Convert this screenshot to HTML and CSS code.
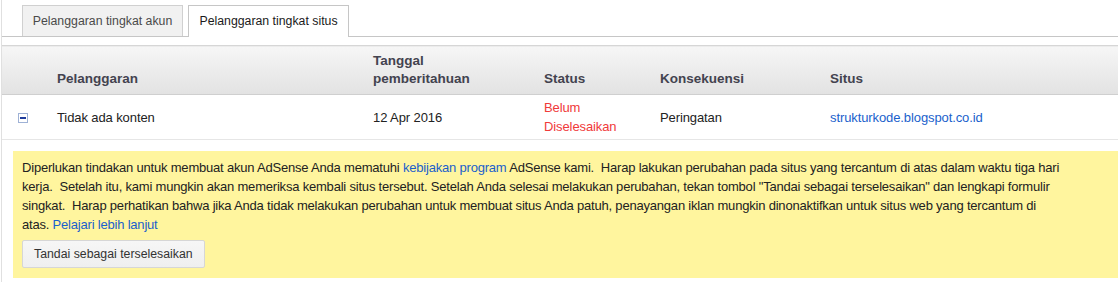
FILE: index.html
```html
<!DOCTYPE html>
<html lang="id">
<head>
    <meta charset="UTF-8">
    <title>Pelanggaran tingkat situs</title>
    <link rel="stylesheet" href="styles.css">
</head>
<body>
    <div class="page">
        <div class="tabs">
            <a class="tab" href="#">Pelanggaran tingkat akun</a>
            <a class="tab active" href="#">Pelanggaran tingkat situs</a>
        </div>
        <table class="violations">
            <colgroup>
                <col class="c-toggle">
                <col class="c-name">
                <col class="c-date">
                <col class="c-status">
                <col class="c-cons">
                <col>
            </colgroup>
            <thead>
                <tr>
                    <th></th>
                    <th>Pelanggaran</th>
                    <th>Tanggal<br>pemberitahuan</th>
                    <th>Status</th>
                    <th>Konsekuensi</th>
                    <th>Situs</th>
                </tr>
            </thead>
            <tbody>
                <tr>
                    <td class="toggle">
                        <svg width="10" height="10" viewBox="0 0 10 10">
                            <rect x="0.5" y="0.5" width="9" height="9" fill="#fff" stroke="#9fb2d6"/>
                            <rect x="2" y="4" width="6" height="2" fill="#1f3c9c"/>
                        </svg>
                    </td>
                    <td>Tidak ada konten</td>
                    <td>12 Apr 2016</td>
                    <td class="unresolved">Belum Diselesaikan</td>
                    <td>Peringatan</td>
                    <td><a href="#">strukturkode.blogspot.co.id</a></td>
                </tr>
            </tbody>
        </table>
        <div class="notice">
            <p>Diperlukan tindakan untuk membuat akun AdSense Anda mematuhi <a href="#">kebijakan program</a> AdSense kami.&nbsp; Harap lakukan perubahan pada situs yang tercantum di atas dalam waktu tiga hari kerja.&nbsp; Setelah itu, kami mungkin akan memeriksa kembali situs tersebut. Setelah Anda selesai melakukan perubahan, tekan tombol "Tandai sebagai terselesaikan" dan lengkapi formulir singkat.&nbsp; Harap perhatikan bahwa jika Anda tidak melakukan perubahan untuk membuat situs Anda patuh, penayangan iklan mungkin dinonaktifkan untuk situs web yang tercantum di atas. <a href="#">Pelajari lebih lanjut</a></p>
            <button class="btn">Tandai sebagai terselesaikan</button>
        </div>
    </div>
</body>
</html>
```

FILE: styles.css
```css
body {
    margin: 0;
    font-family: "Liberation Sans", Arial, sans-serif;
    font-size: 13px;
    color: #222;
    background-color: #fff;
}
a {
    color: #1a5fcc;
    text-decoration: none;
}
.page {
    margin-left: 1px;
    border-left: 1px solid #e0e0e0;
    min-height: 282px;
}
.tabs {
    display: flex;
    gap: 5px;
    height: 31px;
    padding: 5px 0 0 20px;
    border-bottom: 1px solid #c6c6c6;
}
.tab {
    box-sizing: border-box;
    width: 161px;
    height: 31px;
    line-height: 30px;
    text-align: center;
    font-size: 12.3px;
    color: #4a4a4a;
    background-color: #f1f1f1;
    border: 1px solid #d0d0d0;
    border-bottom: none;
}
.tab.active {
    height: 32px;
    color: #1a1a1a;
    background-color: #fff;
    border-color: #c6c6c6;
}
.violations {
    width: 100%;
    margin-top: 8px;
    border-collapse: collapse;
    table-layout: fixed;
}
.c-toggle { width: 43px; }
.c-name { width: 316px; }
.c-date { width: 171px; }
.c-status { width: 116px; }
.c-cons { width: 170px; }
.violations th {
    height: 42px;
    padding: 0 12px 6px;
    vertical-align: bottom;
    text-align: left;
    line-height: 18px;
    font-size: 13.5px;
    font-weight: bold;
    color: #43434f;
    background: linear-gradient(#f6f6f6, #e2e2e2);
    border-top: 1px solid #d6d6d6;
    border-bottom: 1px solid #cfcfcf;
}
.violations td {
    height: 38px;
    padding: 3px 12px;
    line-height: 19px;
    vertical-align: middle;
    letter-spacing: -0.1px;
    border-bottom: 1px solid #e6e6e6;
}
.violations td.toggle {
    padding: 3px 0 0 16px;
}
.unresolved {
    color: #f03a3a;
}
.notice {
    margin: 11px 0 0 11px;
    padding: 7px 54px 10px 9px;
    background-color: #fff59e;
}
.notice p {
    margin: 0;
    line-height: 19px;
    letter-spacing: -0.2px;
}
.btn {
    display: block;
    margin-top: 6px;
    height: 28px;
    padding: 0 11px;
    font-family: "Liberation Sans", Arial, sans-serif;
    font-size: 12.3px;
    color: #333;
    background: linear-gradient(#f6f6f6, #efefef);
    border: 1px solid #d6d6d6;
    border-radius: 2px;
}
```
